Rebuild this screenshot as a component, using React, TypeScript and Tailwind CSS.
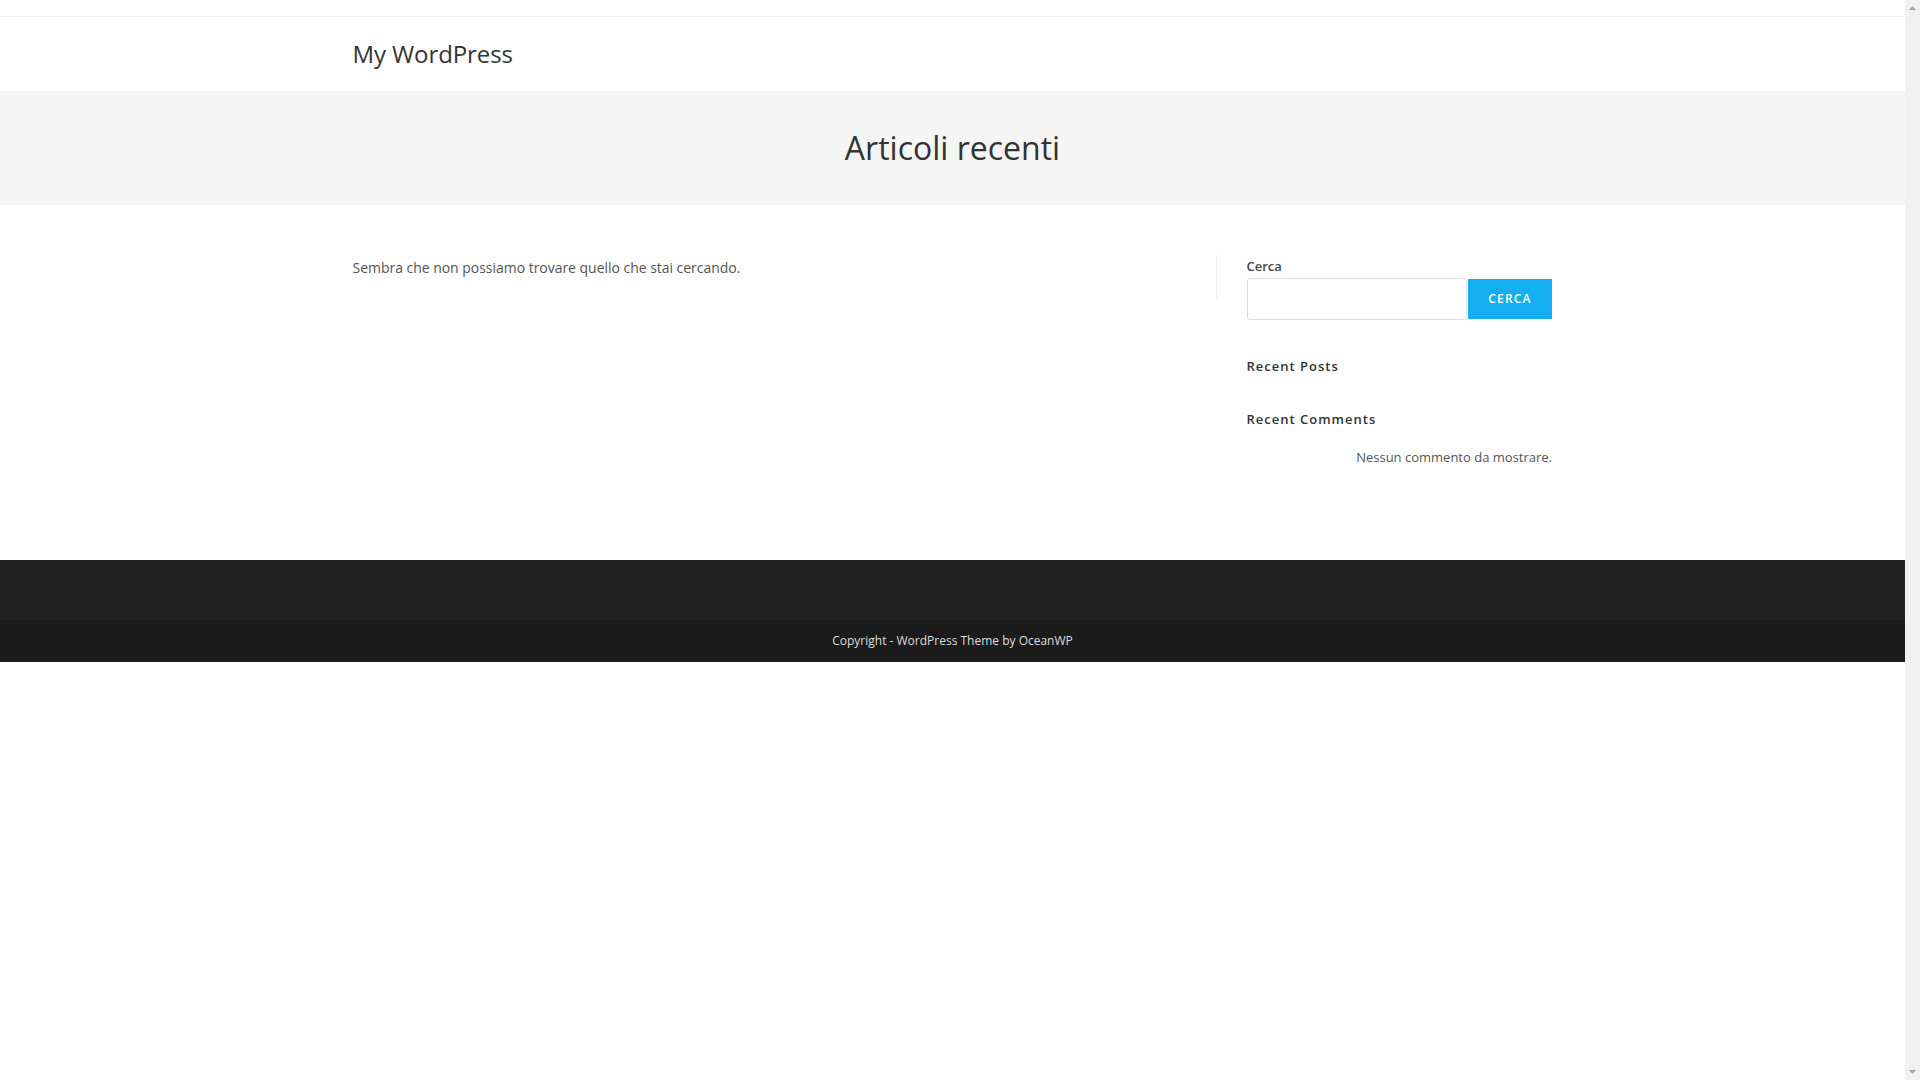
export default function App() {
  return (
    <div className="flex h-screen w-full overflow-hidden bg-white font-['Open_Sans',sans-serif] text-[14px] text-[#555]">
      <div className="flex-1 min-w-0">
        <div className="h-[17px] border-b border-[#f1f1f1]" />
        <header className="h-[75px] border-b border-[#f5f5f5]">
          <div className="mx-auto flex h-full w-[1200px] items-center">
            <span className="text-[24px] tracking-[-0.1px] text-[#333]">My WordPress</span>
          </div>
        </header>
        <div className="flex h-[113px] items-center justify-center bg-[#f5f5f5] pb-[2px]">
          <h1 className="text-[32px] text-[#333]">Articoli recenti</h1>
        </div>
        <main className="mx-auto flex h-[355px] w-[1200px] pt-[50px]">
          <div className="h-[45px] w-[864px] border-r border-[#f1f1f1] pt-[1px]">
            <p className="leading-[24px] tracking-[-0.03px]">Sembra che non possiamo trovare quello che stai cercando.</p>
          </div>
          <aside className="flex-1 pl-[30px]">
            <label className="block pt-[1px] text-[13px] leading-[20px] font-semibold text-[#444]">Cerca</label>
            <div className="mt-[2px] flex items-center">
              <div className="h-[42px] w-[220.5px] rounded-[3px] border-[1.5px] border-[#ddd] bg-white" />
              <button className="ml-[1px] h-[40px] w-[84px] bg-[#13aff0] text-[12px] font-semibold tracking-[1.2px] text-white">CERCA</button>
            </div>
            <h4 className="mt-[36px] text-[13px] leading-[20px] font-semibold tracking-[1px] text-[#333]">Recent Posts</h4>
            <h4 className="mt-[33px] text-[13px] leading-[20px] font-semibold tracking-[1px] text-[#333]">Recent Comments</h4>
            <p className="mt-[16px] pr-[0.5px] text-right text-[13px] leading-[24px]">Nessun commento da mostrare.</p>
          </aside>
        </main>
        <div className="h-[60px] bg-[#222]" />
        <div className="flex h-[42px] items-center justify-center bg-[#1b1b1b] text-[12px] text-[#ddd]">
          Copyright - WordPress Theme by OceanWP
        </div>
      </div>
      <div className="flex h-screen w-[15px] flex-col items-center justify-between bg-[#f1f1f1] py-[6px]">
        <svg width="7" height="4" viewBox="0 0 7 4"><path d="M3.5 0 7 4H0z" fill="#a3a3a3" /></svg>
        <svg width="7" height="4" viewBox="0 0 7 4"><path d="M0 0h7L3.5 4z" fill="#a3a3a3" /></svg>
      </div>
    </div>
  );
}
